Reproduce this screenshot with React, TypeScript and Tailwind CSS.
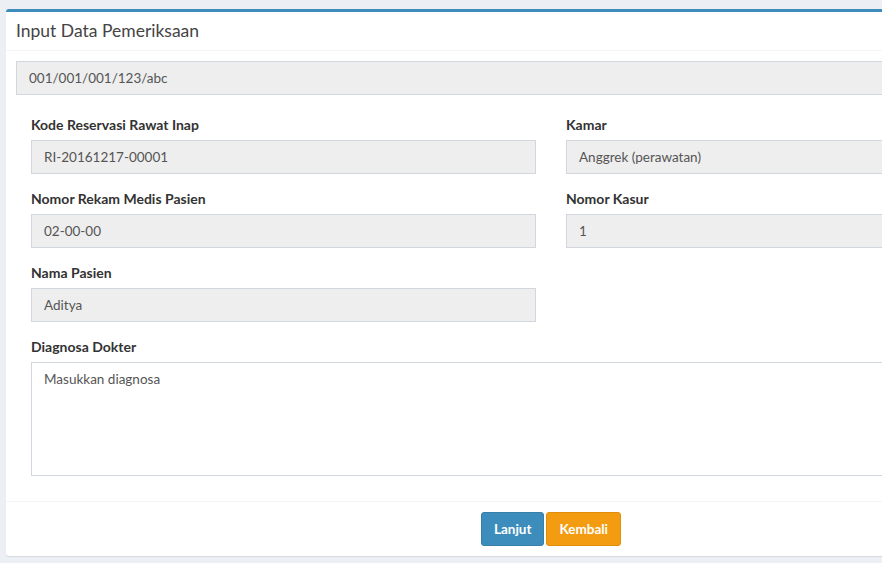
import React from "react";

const inputCls =
  "block w-full h-[34px] px-3 bg-[#eeeeee] border border-[#d2d6de] text-[13.5px] text-[#555] outline-none";

function Field({ label, value }: { label: string; value: string }) {
  return (
    <div className="mb-[15px]">
      <label className="block mb-[5px] text-[14px] leading-5 font-bold text-[#333]">{label}</label>
      <input readOnly value={value} className={inputCls} />
    </div>
  );
}

export default function App() {
  return (
    <div
      className="min-h-screen w-full overflow-hidden bg-[#ecf0f5] pl-[6px] pt-[9px]"
      style={{ fontFamily: "Lato, 'Liberation Sans', sans-serif" }}
    >
      <div className="w-[1090px] bg-white border-t-[3px] border-[#3c8dbc] rounded-[3px] shadow-[0_1px_1px_rgba(0,0,0,0.1)]">
        <div className="px-[10px] py-[10px] border-b border-[#f4f4f4]">
          <h3 className="text-[17.5px] leading-[18px] text-[#444]">Input Data Pemeriksaan</h3>
        </div>

        <div className="p-[10px]">
          <input readOnly value="001/001/001/123/abc" className={inputCls} />

          <div className="grid grid-cols-2 mt-5">
            <div className="px-[15px]">
              <Field label="Kode Reservasi Rawat Inap" value="RI-20161217-00001" />
              <Field label="Nomor Rekam Medis Pasien" value="02-00-00" />
              <Field label="Nama Pasien" value="Aditya" />
            </div>
            <div className="px-[15px]">
              <Field label="Kamar" value="Anggrek (perawatan)" />
              <Field label="Nomor Kasur" value="1" />
            </div>
          </div>

          <div className="px-[15px] mb-[15px]">
            <label className="block mb-[5px] text-[14px] leading-5 font-bold text-[#333]">Diagnosa Dokter</label>
            <textarea
              rows={5}
              placeholder="Masukkan diagnosa"
              className="block w-full h-[114px] px-3 py-[6px] border border-[#d2d6de] text-[13.5px] leading-5 text-[#555] placeholder:text-[#555] outline-none resize-none"
            />
          </div>
        </div>

        <div className="border-t border-[#f4f4f4] p-[10px] flex justify-center gap-[2px]">
          <button className="h-[34px] px-3 rounded-[3px] bg-[#3c8dbc] border border-[#367fa9] text-white text-[13.5px] font-bold">
            Lanjut
          </button>
          <button className="h-[34px] px-3 rounded-[3px] bg-[#f39c12] border border-[#e08e0b] text-white text-[13.5px] font-bold">
            Kembali
          </button>
        </div>
      </div>
    </div>
  );
}
